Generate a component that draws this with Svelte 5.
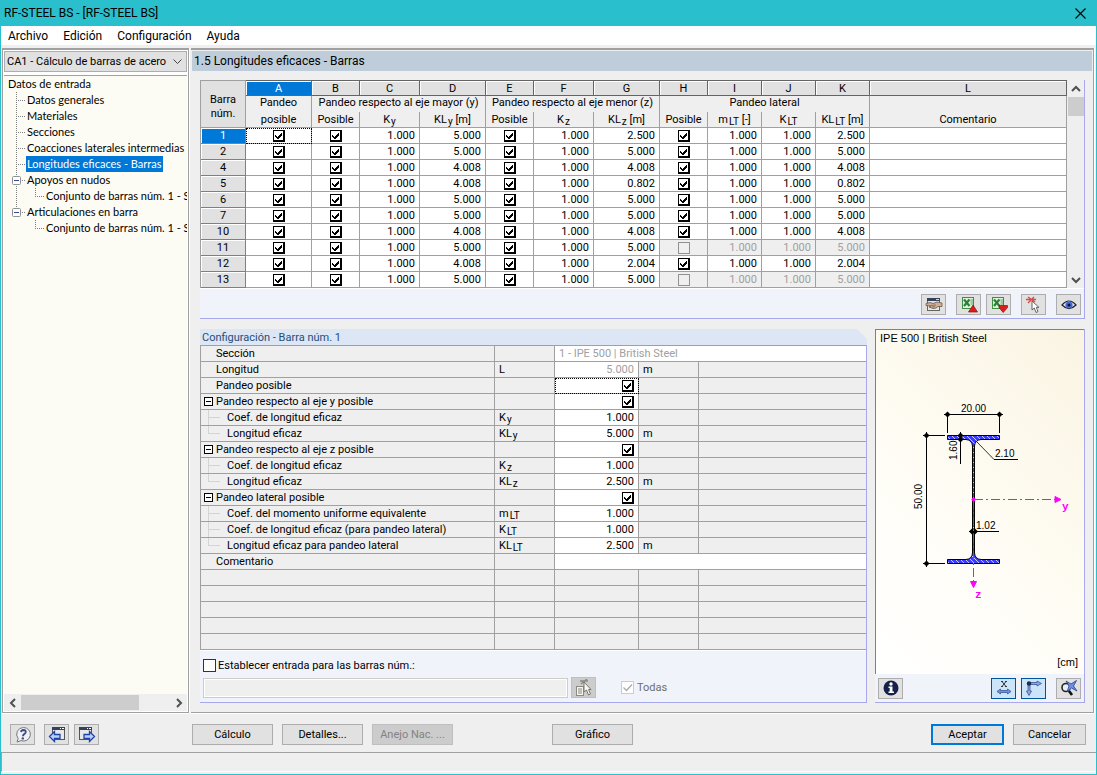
<script lang="ts">
  type Branch = "none" | "item" | "open" | "last-open" | "child" | "last-child";

  interface TreeRow {
    label: string;
    branch: Branch;
    selected?: boolean;
  }

  const menu = ["Archivo", "Edición", "Configuración", "Ayuda"];

  const tree: TreeRow[] = [
    { label: "Datos de entrada", branch: "none" },
    { label: "Datos generales", branch: "item" },
    { label: "Materiales", branch: "item" },
    { label: "Secciones", branch: "item" },
    { label: "Coacciones laterales intermedias", branch: "item" },
    { label: "Longitudes eficaces - Barras", branch: "item", selected: true },
    { label: "Apoyos en nudos", branch: "open" },
    { label: "Conjunto de barras núm. 1 - S", branch: "child" },
    { label: "Articulaciones en barra", branch: "last-open" },
    { label: "Conjunto de barras núm. 1 - S", branch: "last-child" },
  ];

  const letters = ["B", "C", "D", "E", "F", "G", "H", "I", "J", "K", "L"];

  let members = $state([
    { no: 1, kly: "5.000", klz: "2.500", lateral: true },
    { no: 2, kly: "5.000", klz: "5.000", lateral: true },
    { no: 4, kly: "4.008", klz: "4.008", lateral: true },
    { no: 5, kly: "4.008", klz: "0.802", lateral: true },
    { no: 6, kly: "5.000", klz: "5.000", lateral: true },
    { no: 7, kly: "5.000", klz: "5.000", lateral: true },
    { no: 10, kly: "4.008", klz: "4.008", lateral: true },
    { no: 11, kly: "5.000", klz: "5.000", lateral: false },
    { no: 12, kly: "4.008", klz: "2.004", lateral: true },
    { no: 13, kly: "5.000", klz: "5.000", lateral: false },
  ]);

  interface Setting {
    label: string;
    kind: "plain" | "group" | "mid" | "end";
    sym?: string;
    sub?: string;
    value?: string;
    unit?: string;
    check?: boolean;
    wide?: boolean;
    muted?: boolean;
    focus?: boolean;
  }

  const settings: Setting[] = [
    { label: "Sección", kind: "plain", value: "1 - IPE 500 | British Steel", wide: true, muted: true },
    { label: "Longitud", kind: "plain", sym: "L", value: "5.000", unit: "m", muted: true },
    { label: "Pandeo posible", kind: "plain", check: true, focus: true },
    { label: "Pandeo respecto al eje y posible", kind: "group", check: true },
    { label: "Coef. de longitud eficaz", kind: "mid", sym: "K", sub: "y", value: "1.000" },
    { label: "Longitud eficaz", kind: "end", sym: "KL", sub: "y", value: "5.000", unit: "m" },
    { label: "Pandeo respecto al eje z posible", kind: "group", check: true },
    { label: "Coef. de longitud eficaz", kind: "mid", sym: "K", sub: "z", value: "1.000" },
    { label: "Longitud eficaz", kind: "end", sym: "KL", sub: "z", value: "2.500", unit: "m" },
    { label: "Pandeo lateral posible", kind: "group", check: true },
    { label: "Coef. del momento uniforme equivalente", kind: "mid", sym: "m", sub: "LT", value: "1.000" },
    { label: "Coef. de longitud eficaz (para pandeo lateral)", kind: "mid", sym: "K", sub: "LT", value: "1.000" },
    { label: "Longitud eficaz para pandeo lateral", kind: "end", sym: "KL", sub: "LT", value: "2.500", unit: "m" },
    { label: "Comentario", kind: "plain", value: "", wide: true },
  ];

  let forMembers = $state(false);
</script>

{#snippet sym(base: string, sub: string, unit = "")}
  {base}<span class="sub">{sub}</span>{unit ? ` ${unit}` : ""}
{/snippet}

{#snippet branchLines(kind: Branch)}
  {#if kind === "child" || kind === "last-child"}
    <svg class="branch" width="41" height="16" viewBox="0 0 41 16">
      {#if kind === "child"}<path d="M12.5 0V16" />{/if}
      <path d="M31.5 0V8M31 8.5H41" />
    </svg>
  {:else if kind !== "none"}
    <svg class="branch" width="22" height="16" viewBox="0 0 22 16">
      <path d={kind === "last-open" ? "M12.5 0V8M12 8.5H22" : "M12.5 0V16M12 8.5H22"} />
      {#if kind !== "item"}
        <rect x="8.5" y="4.5" width="8" height="8" rx="1" />
        <path class="minus" d="M10 8.5H15" />
      {/if}
    </svg>
  {/if}
{/snippet}

{#snippet arrow(d: string)}
  <svg width="10" height="10" viewBox="0 0 10 10">
    <path {d} fill="none" stroke="#505050" stroke-width="2" />
  </svg>
{/snippet}

<div class="window">
  <header class="titlebar">
    <span>RF-STEEL BS - [RF-STEEL BS]</span>
    <button class="close" aria-label="Cerrar">
      <svg width="11" height="11" viewBox="0 0 11 11">
        <path d="M0.5 0.5L10.5 10.5M10.5 0.5L0.5 10.5" stroke="#000" stroke-width="1.1" />
      </svg>
    </button>
  </header>

  <nav class="menubar">
    {#each menu as item}
      <button>{item}</button>
    {/each}
  </nav>

  <div class="workspace">
    <aside class="navigator">
      <select class="case" aria-label="Caso de cálculo">
        <option>CA1 - Cálculo de barras de acero</option>
      </select>
      <ul class="tree">
        {#each tree as row}
          <li>
            {@render branchLines(row.branch)}
            <a href="#datos" class:selected={row.selected} class:root={row.branch === "none"}>{row.label}</a>
          </li>
        {/each}
      </ul>
      <div class="hscroll">
        <button aria-label="Izquierda">{@render arrow("M7 1L3 5L7 9")}</button>
        <div class="htrack"><div class="hthumb"></div></div>
        <button aria-label="Derecha">{@render arrow("M3 1L7 5L3 9")}</button>
      </div>
    </aside>

    <main class="content">
      <h1>1.5 Longitudes eficaces - Barras</h1>

      <section class="members">
        <div class="members-grid">
          <table class="grid">
            <colgroup>
              <col style:width="45px" />
              {#each [66, 48, 60, 66, 48, 60, 66, 48, 54, 54, 54] as w}
                <col style:width="{w}px" />
              {/each}
              <col />
            </colgroup>
            <thead>
              <tr class="letters">
                <th class="corner" rowspan="3">Barra<br />núm.</th>
                <th class="active">A</th>
                {#each letters as letter}
                  <th>{letter}</th>
                {/each}
              </tr>
              <tr class="groups">
                <th>Pandeo</th>
                <th colspan="3">Pandeo respecto al eje mayor (y)</th>
                <th colspan="3">Pandeo respecto al eje menor (z)</th>
                <th colspan="4">Pandeo lateral</th>
                <th></th>
              </tr>
              <tr class="names">
                <th>posible</th>
                <th>Posible</th>
                <th>{@render sym("K", "y")}</th>
                <th>{@render sym("KL", "y", "[m]")}</th>
                <th>Posible</th>
                <th>{@render sym("K", "z")}</th>
                <th>{@render sym("KL", "z", "[m]")}</th>
                <th>Posible</th>
                <th>{@render sym("m", "LT", "[-]")}</th>
                <th>{@render sym("K", "LT")}</th>
                <th>{@render sym("KL", "LT", "[m]")}</th>
                <th>Comentario</th>
              </tr>
            </thead>
            <tbody>
              {#each members as m, i}
                <tr>
                  <th class:active={i === 0}>{m.no}</th>
                  <td class="tick" class:focus={i === 0}>
                    <input type="checkbox" class="box" checked aria-label="Pandeo posible, barra {m.no}" />
                  </td>
                  <td class="tick">
                    <input type="checkbox" class="box" checked aria-label="Eje mayor, barra {m.no}" />
                  </td>
                  <td>1.000</td>
                  <td>{m.kly}</td>
                  <td class="tick">
                    <input type="checkbox" class="box" checked aria-label="Eje menor, barra {m.no}" />
                  </td>
                  <td>1.000</td>
                  <td>{m.klz}</td>
                  <td class="tick" class:off={!m.lateral}>
                    <input
                      type="checkbox"
                      class="box"
                      checked={m.lateral}
                      disabled={!m.lateral}
                      aria-label="Pandeo lateral, barra {m.no}"
                    />
                  </td>
                  <td class:off={!m.lateral}>1.000</td>
                  <td class:off={!m.lateral}>1.000</td>
                  <td class:off={!m.lateral}>{m.klz}</td>
                  <td></td>
                </tr>
              {/each}
            </tbody>
          </table>
          <div class="vscroll">
            <button aria-label="Arriba">{@render arrow("M1 7L5 3L9 7")}</button>
            <div class="vtrack"><div class="vthumb"></div></div>
            <button aria-label="Abajo">{@render arrow("M1 3L5 7L9 3")}</button>
          </div>
        </div>

        <div class="strip tools">
          <button class="icon" aria-label="Editar selección">
            <svg width="18" height="16" viewBox="0 0 18 16">
              <rect x="2.5" y="1.5" width="12" height="12" fill="#e4e8ea" stroke="#666" />
              <path d="M2 1H15V4H2Z" fill="#34435c" />
              <path d="M11 2.5H14" stroke="#cfd8e8" />
              <path d="M1 6.500L5 5.500L8 6.500L12 5L17 6V9.500L13 9.500L11 11L8 11.500L4 10L6 9L1 8.500Z" fill="#cfae92" stroke="#6b5545" stroke-width="0.800" />
              <path d="M6 8.500L11 8M7 10L10 9.500" stroke="#7d6450" stroke-width="0.800" />
            </svg>
          </button>
          <div class="pair">
            {#each ["#up", "#down"] as dir}
              <button class="icon" aria-label={dir === "#up" ? "Exportar a Excel" : "Importar de Excel"}>
                <svg width="18" height="18" viewBox="0 0 18 18">
                  <rect x="2" y="1" width="12" height="12" fill="#3f8f45" />
                  <rect x="3" y="2" width="10" height="10" fill="#dff0dc" />
                  <path d="M4 3.500L9.500 10M9.500 3.500L4 10" stroke="#2c8036" stroke-width="2.200" />
                  <path d="M10.500 4H13M10.500 6H13M10.500 8H13" stroke="#5aa55e" />
                  <path
                    d={dir === "#up" ? "M8.500 16L13 9L17.500 16Z" : "M9 9.500H17.500V11.500L13.200 16.500L9 11.500Z"}
                    fill="#e01b1b"
                    stroke="#861010"
                    stroke-width="0.7"
                  />
                </svg>
              </button>
            {/each}
          </div>
          <button class="icon" aria-label="Seleccionar barra">
            <svg width="18" height="18" viewBox="0 0 18 18">
              <path d="M3 1L10 6M9 1L3 7M1 3.500H11" stroke="#d84a4a" stroke-width="1.400" />
              <path d="M7 5V14L9.300 12L11 16.500L13 15.600L11.300 11.400H14Z" fill="#fff" stroke="#555" stroke-width="0.900" />
            </svg>
          </button>
          <button class="icon" aria-label="Modo de vista">
            <svg width="16" height="14" viewBox="0 0 16 14">
              <path d="M1 7Q8 -1 15 7Q8 14 1 7Z" fill="#dfe4f6" stroke="#222" stroke-width="1.200" />
              <circle cx="8" cy="7" r="3.600" fill="#4468d8" />
              <circle cx="8" cy="7" r="1.500" fill="#0a1030" />
            </svg>
          </button>
        </div>
      </section>

      <div class="lower">
        <section class="config">
          <h2>Configuración - Barra núm. 1</h2>
          <div class="config-body">
            <table class="props">
              <colgroup>
                <col style:width="294px" />
                <col style:width="60px" />
                <col style:width="84px" />
                <col style:width="60px" />
                <col />
              </colgroup>
              <tbody>
                {#each settings as s}
                  <tr>
                    <th class={s.kind}>
                      <div class="prop">
                        {#if s.kind === "group"}
                          <button class="fold" aria-label="Contraer {s.label}">
                            <svg width="9" height="9" viewBox="0 0 9 9" shape-rendering="crispEdges">
                              <path d="M0.5 0.500H8.500V8.500H0.500ZM2 4.500H7" fill="#fff" stroke="#000" />
                            </svg>
                          </button>
                        {:else if s.kind !== "plain"}
                          <svg class="elbow" width="12" height="15" viewBox="0 0 12 15">
                            <path d={s.kind === "mid" ? "M0.5 0V15M0 7.500H12" : "M0.500 0V8M0 7.500H12"} />
                          </svg>
                        {/if}
                        <span>{s.label}</span>
                      </div>
                    </th>
                    <td class="symbol">
                      {#if s.sub}{@render sym(s.sym ?? "", s.sub)}{:else}{s.sym ?? ""}{/if}
                    </td>
                    {#if s.wide}
                      <td class="value text" class:muted={s.muted} colspan="3">{s.value}</td>
                    {:else}
                      <td class="value" class:muted={s.muted} class:focus={s.focus}>
                        {#if s.check}
                          <input type="checkbox" class="box" checked aria-label={s.label} />
                        {:else}
                          {s.value}
                        {/if}
                      </td>
                      <td class="unit">{s.unit ?? ""}</td>
                      <td></td>
                    {/if}
                  </tr>
                {/each}
                {#each Array(5) as _}
                  <tr><th></th><td></td><td></td><td></td><td></td></tr>
                {/each}
              </tbody>
            </table>

            <div class="strip assign">
              <label class="check">
                <input type="checkbox" bind:checked={forMembers} />
                Establecer entrada para las barras núm.:
              </label>
              <div class="assign-row">
                <input type="text" disabled aria-label="Barras núm." />
                <button class="icon" disabled aria-label="Elegir barras">
                  <svg width="18" height="18" viewBox="0 0 18 18">
                    <path d="M5 2H13M6 5L12 0" stroke="#8b8b84" stroke-width="1.500" />
                    <rect x="1.500" y="7.500" width="7" height="9" fill="#f4f4ec" stroke="#8b8b84" />
                    <path d="M3 10H7M3 12H7M3 14H7" stroke="#8b8b84" />
                    <path d="M9 3V13L11.500 11L13.500 16L15.500 15L13.500 10.500H16Z" fill="#f8f8f2" stroke="#77776f" />
                  </svg>
                </button>
                <label class="check all">
                  <input type="checkbox" checked disabled />
                  Todas
                </label>
              </div>
            </div>
          </div>
        </section>

        <section class="preview">
          <div class="canvas">
            <div class="caption">IPE 500 | British Steel</div>
            <svg class="section" viewBox="0 1 208 220">
              <defs>
                <pattern id="hatch" width="5" height="5" patternUnits="userSpaceOnUse">
                  <rect width="5" height="5" fill="#3c3cff" />
                  <path d="M0 0L5 5" stroke="#c8c8ff" />
                </pattern>
              </defs>
              <path
                d="M71.500 45.500H123.500V49.500H105Q99 50 98.500 56V163Q99 169 105 169.500H123.500V173.500H71.500V169.500H90Q96 169 96.500 163V56Q96 50 90 49.500H71.500Z"
                fill="url(#hatch)"
                stroke="#000"
              />
              <g stroke="#000" fill="none">
                <path d="M68 24.500H127M71.500 22V43M123.500 22V43" />
                <path d="M50.500 42V177M47 45.500H69M47 173.500H69" />
                <path d="M84.500 42V74" />
                <path d="M101 52L118 69.500" stroke-width="0.800" />
                <path d="M118 69.500H142M93 141.500H123" />
              </g>
              <g fill="#000">
                {#each [[71.5, 24.5], [123.5, 24.5], [50.5, 45.5], [50.5, 173.5], [84.5, 45.5], [84.5, 49.5], [96, 141.5], [99, 141.5]] as [x, y]}
                  <path d="M{x - 3} {y}L{x} {y - 3}L{x + 3} {y}L{x} {y + 3}Z" />
                {/each}
              </g>
              <g stroke="#f0f" fill="#f0f">
                <path d="M98 109.500H180" stroke-dasharray="9 3 2 3" />
                <path d="M97.500 110V192" stroke-dasharray="9 3 2 3" />
                <path d="M179 106.500L185 109.500L179 112.500Z" />
                <path d="M94.500 191.500L97.500 197.500L100.500 191.500Z" />
                <circle cx="97.500" cy="109.500" r="1.500" />
              </g>
              <g class="dims">
                <text x="85" y="22">20.00</text>
                <text x="119" y="67">2.10</text>
                <text x="100" y="139">1.02</text>
                <text transform="translate(81 70) rotate(-90)">1.60</text>
                <text transform="translate(46 119) rotate(-90)">50.00</text>
              </g>
              <g class="axes">
                <text x="186" y="120">y</text>
                <text x="99" y="208">z</text>
              </g>
            </svg>
            <div class="units">[cm]</div>
          </div>
          <div class="strip tools">
            <button class="icon first" aria-label="Información">
              <svg width="16" height="16" viewBox="0 0 16 16">
                <circle cx="8" cy="8" r="7.500" fill="#16204a" />
                <circle cx="8" cy="4" r="1.700" fill="#fff" />
                <path d="M5.500 6.500H9.500V11.500H11V13H5.500V11.500H6.700V8H5.500Z" fill="#fff" />
              </svg>
            </button>
            <div class="pair">
              <button class="icon on" aria-label="Acotaciones">
                <svg width="18" height="16" viewBox="0 0 18 16">
                  <path d="M7 1.500L11 6.500M11 1.500L7 6.500M6 1.500H8M10 1.500H12M6 6.500H8M10 6.500H12" stroke="#222" stroke-width="0.900" />
                  <path d="M2 11.500L5.500 9V10.500H12.500V9L16 11.500L12.500 14V12.500H5.500V14Z" fill="#6f8fe0" stroke="#3a5596" stroke-width="0.800" />
                </svg>
              </button>
              <button class="icon on" aria-label="Ejes">
                <svg width="20" height="18" viewBox="0 0 20 18">
                  <path d="M5 3.500H13V2L17.500 4.500L13 7V5.500H5Z" fill="#8aa5e8" stroke="#3a5596" stroke-width="0.800" />
                  <path d="M4 5H6V12H7.500L5 16.500L2.500 12H4Z" fill="#8aa5e8" stroke="#3a5596" stroke-width="0.800" />
                  <circle cx="5" cy="4.500" r="2.200" fill="#1c2d55" />
                </svg>
              </button>
            </div>
            <button class="icon" aria-label="Restablecer vista">
              <svg width="18" height="16" viewBox="0 0 18 16">
                <circle cx="6" cy="7.500" r="4" fill="#e9edf5" stroke="#222" stroke-width="1.600" />
                <path d="M9 11L12 15" stroke="#111" stroke-width="2.600" />
                <path d="M6 1L11 4L16.500 0.500L13.500 6L17 11L11.500 8L7 12L9 6Z" fill="#6f90e6" stroke="#263f86" stroke-width="0.800" />
              </svg>
            </button>
          </div>
        </section>
      </div>
    </main>
  </div>

  <footer class="actions">
    <div class="nav-icons">
      <button class="icon" aria-label="Ayuda">
        <svg width="18" height="18" viewBox="0 0 18 18">
          <path d="M9.500 1.500A6.800 6.800 0 1 1 7 14.600L3 16L4.200 12.600A6.800 6.800 0 0 1 9.500 1.500Z" fill="#f0f1f6" stroke="#777" />
          <path d="M7 6Q7.400 4 9.600 4Q12 4.200 11.700 6.200Q11.300 7.600 9.800 8.400Q9 9 9 10.200" fill="none" stroke="#3a4a86" stroke-width="1.900" />
          <circle cx="8.800" cy="12.400" r="1.200" fill="#3a4a86" />
        </svg>
      </button>
      <div class="pair">
        <button class="icon" aria-label="Anterior">
          <svg width="18" height="17" viewBox="0 0 18 17">
            <rect x="4.500" y="1.500" width="12" height="12" fill="#e8e8e8" stroke="#555" />
            <path d="M4 1H17V4H4Z" fill="#34435c" />
            <path d="M12 2.500H13M14 2.500H16" stroke="#fff" />
            <path d="M1.500 10.500L6.500 5.500V8.500H12V12.500H6.500V15.500Z" fill="#bcd0ff" stroke="#1f43a5" stroke-width="1.300" />
          </svg>
        </button>
        <button class="icon" aria-label="Siguiente">
          <svg width="18" height="17" viewBox="0 0 18 17">
            <rect x="1.500" y="1.500" width="12" height="12" fill="#e8e8e8" stroke="#555" />
            <path d="M1 1H14V4H1Z" fill="#34435c" />
            <path d="M9 2.500H10M11 2.500H13" stroke="#fff" />
            <path d="M16.500 10.500L11.500 5.500V8.500H6V12.500H11.500V15.500Z" fill="#bcd0ff" stroke="#1f43a5" stroke-width="1.300" />
          </svg>
        </button>
      </div>
    </div>
    <div class="commands">
      <button class="cmd">Cálculo</button>
      <button class="cmd">Detalles...</button>
      <button class="cmd" disabled>Anejo Nac. ...</button>
      <button class="cmd apart">Gráfico</button>
    </div>
    <div class="confirm">
      <button class="cmd default">Aceptar</button>
      <button class="cmd">Cancelar</button>
    </div>
  </footer>

  <div class="statusbar"></div>
</div>

<style>
  :global(body) {
    margin: 0;
  }

  .window {
    --face: #efefef;
    --btn: #e1e1e1;
    --line: #a0a0a0;
    --blue: #0078d7;
    --strip: #f0f4fa;
    --violet: #a8a8ec;
    --ui: Roboto, "Liberation Sans", Arial, sans-serif;
    display: flex;
    flex-direction: column;
    box-sizing: border-box;
    min-height: 100vh;
    border: 1px solid #2abfcc;
    background: var(--face);
    color: #000;
    font: 11px/15px var(--ui);
  }

  button,
  input,
  select {
    font: inherit;
    color: inherit;
    margin: 0;
    box-sizing: border-box;
  }

  button {
    padding: 0;
    border: 0;
    background: none;
  }

  svg {
    display: block;
  }

  h1,
  h2 {
    margin: 0;
    font-weight: normal;
  }

  /* Title and menu */
  .titlebar {
    display: flex;
    align-items: center;
    justify-content: space-between;
    height: 25px;
    padding: 0 10px 0 3px;
    background: #2abfcc;
    font-size: 12px;
  }

  .menubar {
    display: flex;
    gap: 15px;
    height: 19px;
    padding-left: 7px;
    background: #fff;
    font-size: 12px;
    line-height: 20px;
  }

  /* Workspace */
  .workspace {
    display: flex;
    flex: 1;
    margin-top: 3px;
    padding: 0 2px 0 1px;
  }

  .navigator {
    display: flex;
    flex-direction: column;
    width: 187px;
    box-sizing: border-box;
    border: 1px solid var(--line);
    border-top-width: 2px;
    margin-right: 2px;
    box-shadow: 0 1px #fff, 1px 0 #fff;
    background: #fff;
  }

  .case {
    appearance: none;
    height: 21px;
    margin: 1px;
    padding: 0 18px 0 2px;
    border: 1px solid #adadad;
    border-radius: 0;
    background: var(--btn)
      url("data:image/svg+xml,%3Csvg xmlns='http://www.w3.org/2000/svg' width='9' height='6'%3E%3Cpath d='M.5.5l4 4 4-4' fill='none' stroke='%23444'/%3E%3C/svg%3E")
      no-repeat right 4px center;
  }

  .tree {
    flex: 1;
    margin: 2px 1px 0;
    padding: 0;
    border-top: 1px solid var(--line);
    background: #fcfcf4;
    font-family: Lato, "Liberation Sans", sans-serif;
    list-style: none;
    overflow: hidden;
  }

  .tree li {
    display: flex;
    height: 16px;
    white-space: nowrap;
  }

  .tree a {
    padding: 0 2px 0 1px;
    color: inherit;
    line-height: 16px;
    text-decoration: none;
  }

  .tree a.root {
    padding-left: 4px;
  }

  .tree a.selected {
    background: var(--blue);
    color: #fff;
  }

  .branch {
    flex: none;
    fill: none;
    stroke: #808080;
    stroke-dasharray: 1 1;
  }

  .branch rect {
    fill: #fff;
    stroke: #919191;
    stroke-dasharray: none;
  }

  .branch .minus {
    stroke: #33478f;
    stroke-dasharray: none;
  }

  .hscroll {
    display: flex;
    height: 17px;
    margin: 0 1px 1px;
    background: var(--face);
  }

  .hscroll button,
  .vscroll button {
    display: grid;
    place-items: center;
    width: 17px;
    height: 17px;
  }

  .htrack {
    flex: 1;
    padding: 1px 0;
  }

  .hthumb {
    width: 79%;
    height: 15px;
    background: #cdcdcd;
  }

  .content {
    display: flex;
    flex: 1;
    flex-direction: column;
    min-width: 0;
    padding: 1px 1px 9px;
    border: solid var(--line);
    border-width: 2px 1px 1px 0;
    box-shadow: 0 1px #fff, 1px 0 #fff;
  }

  h1 {
    padding-left: 2px;
    background: #bfcddb;
    font: 12px/20px var(--ui);
  }

  .strip {
    background: var(--strip);
    box-sizing: border-box;
  }

  /* Member grid */
  .members {
    margin: 9px 7px 10px 8px;
    border: solid var(--violet);
    border-width: 0 1px 1px 0;
  }

  .members-grid {
    display: flex;
  }

  table {
    border-spacing: 0;
    table-layout: fixed;
  }

  th,
  td {
    height: 16px;
    padding: 0;
    box-sizing: border-box;
    font-weight: normal;
    line-height: 15px;
    white-space: nowrap;
  }

  .sub {
    position: relative;
    top: 2px;
    padding-left: 1px;
    font-size: 10px;
    line-height: 10px;
  }

  .grid {
    flex: 1;
    min-width: 0;
    border-left: 1px solid var(--line);
  }

  .grid th,
  .grid td {
    border: solid var(--line);
    border-width: 0 1px 1px 0;
  }

  .grid td {
    padding-right: 4px;
    background: #fff;
    text-align: right;
  }

  .grid .letters th {
    border-color: #646464;
    border-top: 1px solid #646464;
    background: var(--btn);
    box-shadow: inset 1px 1px #fff;
    line-height: 13px;
  }

  .grid .letters .active,
  .grid tbody th.active {
    background: var(--blue);
    color: #fff;
  }

  .grid .letters .corner {
    border-color: var(--line);
    background: var(--btn);
    box-shadow: none;
    line-height: 14px;
    padding-top: 6px;
  }

  .grid .groups th {
    border-bottom: 0;
    line-height: 13px;
    vertical-align: top;
  }

  .grid .names th {
    line-height: 13px;
    overflow: hidden;
  }

  .grid tbody th {
    border-color: #808080;
    background: var(--btn);
    box-shadow: inset 1px 1px #fff;
  }

  .grid td.tick {
    padding: 0;
    text-align: center;
  }

  .grid td.off {
    background: var(--face);
    color: var(--line);
  }

  td.focus {
    outline: 1px dotted #000;
    outline-offset: -1px;
  }

  .box {
    appearance: none;
    display: inline-block;
    width: 12px;
    height: 12px;
    border: 1px solid #000;
    border-width: 1px 2px 2px 1px;
    background: #fff;
    vertical-align: top;
    margin-top: 2px;
  }

  .box:checked {
    background: #fff
      url("data:image/svg+xml,%3Csvg xmlns='http://www.w3.org/2000/svg' width='9' height='9' shape-rendering='crispEdges'%3E%3Cpath d='M1 4h1v1h1v1h1V5h1V4h1V3h1V2h1v3H7v1H6v1H5v1H3V7H2V6H1z'/%3E%3C/svg%3E")
      no-repeat 0 0;
  }

  .box:disabled {
    border-width: 1px;
    border-color: #909090;
    background: var(--face);
  }

  .vscroll {
    display: flex;
    flex-direction: column;
    width: 17px;
    background: var(--face);
  }

  .vtrack {
    flex: 1;
  }

  .vthumb {
    height: 19px;
    margin-left: 1px;
    background: #cdcdcd;
  }

  .tools {
    display: flex;
    align-items: center;
    justify-content: flex-end;
    gap: 10px;
    height: 30px;
    padding: 2px 3px 0 0;
    border-top: 1px solid #fff;
  }

  .pair {
    display: flex;
    gap: 5px;
  }

  .icon {
    display: grid;
    place-items: center;
    width: 25px;
    height: 21px;
    border: 1px solid #adadad;
    background: var(--btn);
    overflow: hidden;
  }

  .icon.on {
    border-color: #005499;
    background: #cce4f7;
  }

  .icon:disabled {
    border-color: #bfbfbf;
    background: #ccc;
  }

  /* Configuration */
  .lower {
    display: flex;
    flex: 1;
    gap: 8px;
    margin: 0 7px 0 8px;
  }

  .config {
    display: flex;
    flex: 1;
    flex-direction: column;
    min-width: 0;
  }

  h2 {
    height: 16px;
    padding-left: 2px;
    background: #dce6f4;
    color: #1f4e79;
    font: 11px/17px var(--ui);
    clip-path: polygon(0 0, calc(100% - 10px) 0, 100% 10px, 100% 100%, 0 100%);
  }

  .config-body {
    flex: 1;
    display: flex;
    flex-direction: column;
    border: solid var(--violet);
    border-width: 0 1px 1px 0;
    background: var(--strip);
  }

  .props {
    width: 100%;
    border: solid var(--line);
    border-width: 1px 0 0 1px;
    background: var(--face);
  }

  .props th,
  .props td {
    border: solid var(--line);
    border-width: 0 1px 1px 0;
    text-align: left;
  }

  .props tr > :last-child {
    border-right: 0;
  }

  .prop {
    display: flex;
    align-items: center;
    height: 15px;
    padding-left: 15px;
  }

  .group .prop {
    padding-left: 3px;
    gap: 3px;
  }

  .mid .prop,
  .end .prop {
    padding-left: 7px;
    gap: 7px;
  }

  .elbow {
    fill: none;
    stroke: #d4d4d4;
  }

  .props td.symbol,
  .props td.unit {
    padding-left: 4px;
  }

  .props td.value {
    padding-right: 4px;
    background: #fff;
    text-align: right;
  }

  .props td.text {
    padding-left: 4px;
    text-align: left;
  }

  .props td.muted {
    color: var(--line);
  }

  .assign {
    flex: 1;
    padding: 7px 0 0 3px;
    border-top: 1px solid #fff;
  }

  .check {
    display: flex;
    align-items: center;
    gap: 2px;
    height: 15px;
  }

  .check input {
    appearance: none;
    width: 13px;
    height: 13px;
    border: 1px solid #333;
    background: #fff;
  }

  .check input:checked {
    background: #fff
      url("data:image/svg+xml,%3Csvg xmlns='http://www.w3.org/2000/svg' width='11' height='11'%3E%3Cpath d='M1.5 5.500l3 3 5.500-6' fill='none' stroke='%23aaa' stroke-width='1.300'/%3E%3C/svg%3E");
  }

  .check input:disabled {
    border-color: #ccc;
  }

  .assign-row {
    display: flex;
    align-items: center;
    margin-top: 4px;
  }

  .assign-row input[type="text"] {
    flex: 0 1 365px;
    min-width: 0;
    height: 20px;
    margin-right: 3px;
    border: 1px solid #ccc;
    background: var(--face);
    box-shadow: inset 0 0 0 1px #fff;
  }

  .check.all {
    margin-left: 25px;
    gap: 3px;
    color: #6d6d6d;
  }

  /* Section preview */
  .preview {
    display: flex;
    flex-direction: column;
    width: 210px;
    box-sizing: border-box;
    border: solid var(--violet);
    border-width: 0 1px 1px 0;
  }

  .canvas {
    display: flex;
    flex: 1;
    flex-direction: column;
    border: solid #808080;
    border-width: 1px 0 0 1px;
    background: linear-gradient(225deg, #faf4e2, #fffdf6 60%, #fff);
  }

  .caption {
    padding: 0 4px;
    line-height: 17px;
    font-family: "Liberation Sans", Arial, sans-serif;
  }

  .section {
    flex: 1;
    width: 100%;
    min-height: 0;
  }

  .dims {
    font: 10px "Liberation Sans", Arial, sans-serif;
  }

  .axes {
    fill: #f0f;
    font: bold 11px "Liberation Mono", "Courier New", monospace;
  }

  .units {
    padding: 0 6px 4px;
    text-align: right;
    font-family: "Liberation Sans", Arial, sans-serif;
  }

  .preview .tools {
    height: 28px;
    padding: 0 3px;
    border-top: 0;
  }

  .tools .first {
    margin-right: auto;
  }

  /* Bottom bar */
  .actions {
    display: flex;
    align-items: center;
    height: 39px;
    padding: 4px 10px 0 9px;
    box-sizing: border-box;
  }

  .nav-icons,
  .commands,
  .confirm {
    display: flex;
    gap: 9px;
  }

  .nav-icons {
    width: 182px;
  }

  .confirm {
    margin-left: auto;
  }

  .cmd {
    width: 81px;
    height: 21px;
    border: 1px solid #adadad;
    background: var(--btn);
  }

  .cmd:disabled {
    border-color: #bfbfbf;
    background: #ccc;
    color: #838383;
  }

  .cmd.apart {
    margin-left: 90px;
  }

  .confirm .cmd {
    width: 73px;
  }

  .cmd.default {
    border: 2px solid var(--blue);
  }

  .statusbar {
    height: 18px;
    margin-bottom: 2px;
    border: solid var(--line);
    border-width: 1px 0 0 1px;
    border-bottom: 1px solid #fff;
  }
</style>
